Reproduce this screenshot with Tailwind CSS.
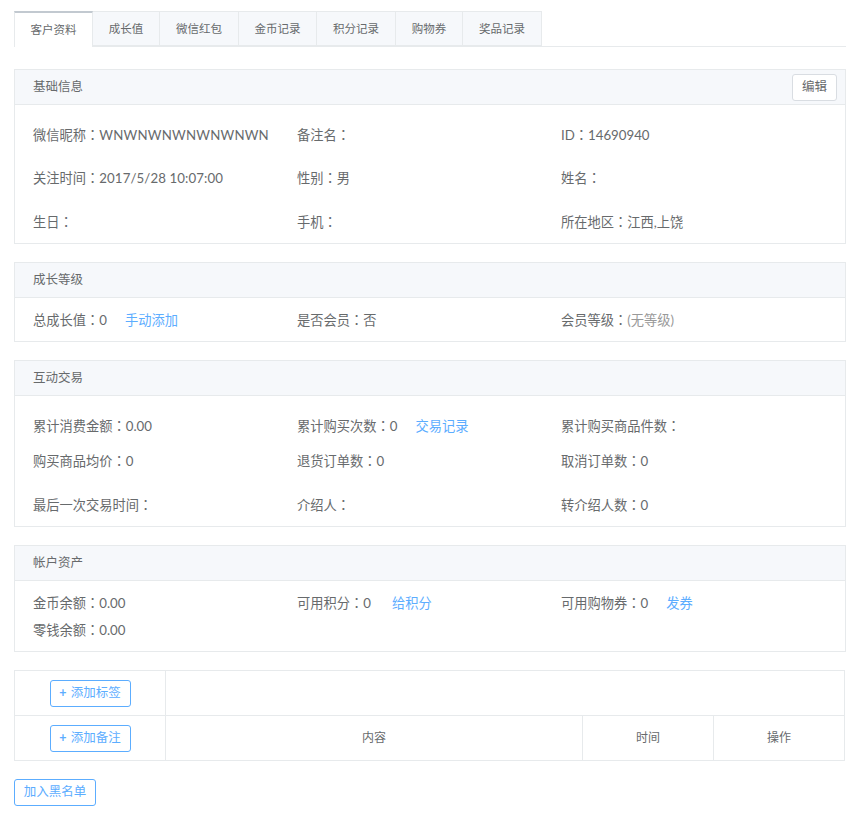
<!DOCTYPE html>
<html lang="zh">
<head>
    <meta charset="UTF-8">
    <title>客户资料</title>
    <script src="https://cdn.jsdelivr.net/npm/@tailwindcss/browser@4"></script>
</head>
<body class="bg-white font-['Lato','Noto_Sans_CJK_SC',sans-serif] text-[13.25px] text-[#676a6c]">
    <div class="pl-[14px] pr-[19px] pt-[11px] pb-[23px]">
        <!-- tabs -->
        <div class="flex h-[36px] border-b border-[#e7eaec] text-[11.5px]">
            <div class="w-[79px] h-[36px] flex items-center justify-center bg-white border-t-2 border-t-[#c2c9d0] border-x border-x-[#e7eaec]">客户资料</div>
            <div class="w-[67px] h-[35px] flex items-center justify-center bg-[#f6f8fb] border-y border-r border-[#e7eaec]">成长值</div>
            <div class="w-[79px] h-[35px] flex items-center justify-center bg-[#f6f8fb] border-y border-r border-[#e7eaec]">微信红包</div>
            <div class="w-[78px] h-[35px] flex items-center justify-center bg-[#f6f8fb] border-y border-r border-[#e7eaec]">金币记录</div>
            <div class="w-[79px] h-[35px] flex items-center justify-center bg-[#f6f8fb] border-y border-r border-[#e7eaec]">积分记录</div>
            <div class="w-[67px] h-[35px] flex items-center justify-center bg-[#f6f8fb] border-y border-r border-[#e7eaec]">购物券</div>
            <div class="w-[79px] h-[35px] flex items-center justify-center bg-[#f6f8fb] border-y border-r border-[#e7eaec]">奖品记录</div>
        </div>

        <!-- 基础信息 -->
        <section class="mt-[22px] border border-[#e7eaec]">
            <div class="h-[35px] flex items-center justify-between pl-[18px] pr-[8px] bg-[#f6f8fb] border-b border-[#e7eaec] text-[12.5px]">
                <span>基础信息</span>
                <button class="w-[45px] h-[27px] bg-white border border-[#d9dde2] rounded-[3px] text-[12.5px] text-[#676a6c]">编辑</button>
            </div>
            <div class="h-[138px] pl-[18px] pt-[8px] grid grid-cols-[264px_264px_1fr] grid-rows-[44px_43px_44px] items-center">
                <div>微信昵称<span lang="zh-Hant" class="font-['Noto_Sans_CJK_TC']">：</span><span class="tracking-[0.2px]">WNWNWNWNWNWNWN</span></div><div>备注名<span lang="zh-Hant" class="font-['Noto_Sans_CJK_TC']">：</span></div><div>ID<span lang="zh-Hant" class="font-['Noto_Sans_CJK_TC']">：</span>14690940</div>
                <div>关注时间<span lang="zh-Hant" class="font-['Noto_Sans_CJK_TC']">：</span><span class="tracking-[0.1px]">2017/5/28 10:07:00</span></div><div>性别<span lang="zh-Hant" class="font-['Noto_Sans_CJK_TC']">：</span>男</div><div>姓名<span lang="zh-Hant" class="font-['Noto_Sans_CJK_TC']">：</span></div>
                <div>生日<span lang="zh-Hant" class="font-['Noto_Sans_CJK_TC']">：</span></div><div>手机<span lang="zh-Hant" class="font-['Noto_Sans_CJK_TC']">：</span></div><div>所在地区<span lang="zh-Hant" class="font-['Noto_Sans_CJK_TC']">：</span>江西,上饶</div>
            </div>
        </section>

        <!-- 成长等级 -->
        <section class="mt-[18px] border border-[#e7eaec]">
            <div class="h-[35px] flex items-center pl-[18px] bg-[#f6f8fb] border-b border-[#e7eaec] text-[12.5px]">成长等级</div>
            <div class="h-[43px] pl-[18px] pt-[1px] grid grid-cols-[264px_264px_1fr] items-center">
                <div>总成长值<span lang="zh-Hant" class="font-['Noto_Sans_CJK_TC']">：</span>0<a class="ml-[18px] text-[#5cadff]">手动添加</a></div>
                <div>是否会员<span lang="zh-Hant" class="font-['Noto_Sans_CJK_TC']">：</span>否</div>
                <div>会员等级<span lang="zh-Hant" class="font-['Noto_Sans_CJK_TC']">：</span><span class="text-[#999999]">(无等级)</span></div>
            </div>
        </section>

        <!-- 互动交易 -->
        <section class="mt-[18px] border border-[#e7eaec]">
            <div class="h-[35px] flex items-center pl-[18px] bg-[#f6f8fb] border-b border-[#e7eaec] text-[12.5px]">互动交易</div>
            <div class="h-[130px] pl-[18px] pt-[10px] grid grid-cols-[264px_264px_1fr] grid-rows-[40px_30px_50px] items-center">
                <div>累计消费金额<span lang="zh-Hant" class="font-['Noto_Sans_CJK_TC']">：</span>0.00</div><div>累计购买次数<span lang="zh-Hant" class="font-['Noto_Sans_CJK_TC']">：</span>0<a class="ml-[18px] text-[#5cadff]">交易记录</a></div><div>累计购买商品件数<span lang="zh-Hant" class="font-['Noto_Sans_CJK_TC']">：</span></div>
                <div>购买商品均价<span lang="zh-Hant" class="font-['Noto_Sans_CJK_TC']">：</span>0</div><div>退货订单数<span lang="zh-Hant" class="font-['Noto_Sans_CJK_TC']">：</span>0</div><div>取消订单数<span lang="zh-Hant" class="font-['Noto_Sans_CJK_TC']">：</span>0</div>
                <div class="pt-[8px]">最后一次交易时间<span lang="zh-Hant" class="font-['Noto_Sans_CJK_TC']">：</span></div><div class="pt-[8px]">介绍人<span lang="zh-Hant" class="font-['Noto_Sans_CJK_TC']">：</span></div><div class="pt-[8px]">转介绍人数<span lang="zh-Hant" class="font-['Noto_Sans_CJK_TC']">：</span>0</div>
            </div>
        </section>

        <!-- 帐户资产 -->
        <section class="mt-[18px] border border-[#e7eaec]">
            <div class="h-[35px] flex items-center pl-[18px] bg-[#f6f8fb] border-b border-[#e7eaec] text-[12.5px]">帐户资产</div>
            <div class="h-[70px] pl-[18px] pt-[9px] grid grid-cols-[264px_264px_1fr] grid-rows-[27px_27px] items-center">
                <div>金币余额<span lang="zh-Hant" class="font-['Noto_Sans_CJK_TC']">：</span>0.00</div><div>可用积分<span lang="zh-Hant" class="font-['Noto_Sans_CJK_TC']">：</span>0<a class="ml-[21px] text-[#5cadff]">给积分</a></div><div>可用购物券<span lang="zh-Hant" class="font-['Noto_Sans_CJK_TC']">：</span>0<a class="ml-[18px] text-[#5cadff]">发券</a></div>
                <div>零钱余额<span lang="zh-Hant" class="font-['Noto_Sans_CJK_TC']">：</span>0.00</div>
            </div>
        </section>

        <!-- 标签和备注 -->
        <table class="mt-[18px] w-[830px] table-fixed border-collapse text-[12px]">
            <colgroup><col class="w-[151px]"><col class="w-[417px]"><col class="w-[131px]"><col class="w-[131px]"></colgroup>
            <tr class="h-[45px]">
                <td class="border border-[#e7eaec] text-center">
                    <button class="w-[81px] h-[27px] bg-white border border-[#5cadff] rounded-[3px] text-[12.5px] text-[#5cadff]"><span class="font-bold mr-[1px]">+</span> 添加标签</button>
                </td>
                <td colspan="3" class="border border-[#e7eaec]"></td>
            </tr>
            <tr class="h-[45px]">
                <td class="border border-[#e7eaec] text-center">
                    <button class="w-[81px] h-[27px] bg-white border border-[#5cadff] rounded-[3px] text-[12.5px] text-[#5cadff]"><span class="font-bold mr-[1px]">+</span> 添加备注</button>
                </td>
                <td class="border border-[#e7eaec] text-center">内容</td>
                <td class="border border-[#e7eaec] text-center">时间</td>
                <td class="border border-[#e7eaec] text-center">操作</td>
            </tr>
        </table>

        <button class="block mt-[18px] w-[82px] h-[27px] bg-white border border-[#5cadff] rounded-[3px] text-[12.5px] text-[#5cadff]">加入黑名单</button>
    </div>
</body>
</html>
